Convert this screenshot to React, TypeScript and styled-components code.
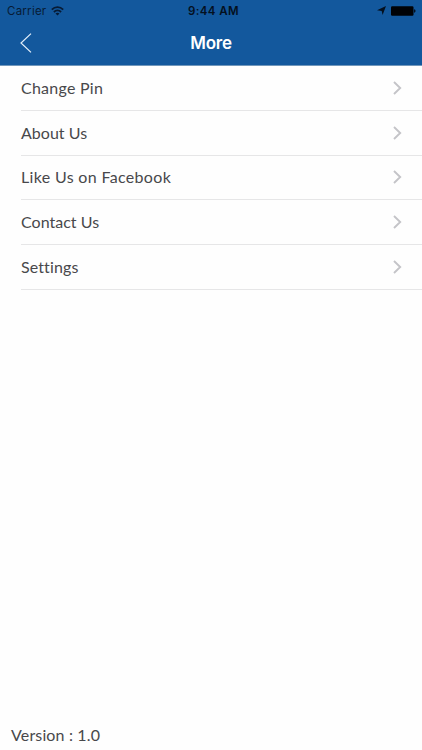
import React from "react";
import styled, { createGlobalStyle } from "styled-components";

const GlobalStyle = createGlobalStyle`
  * { box-sizing: border-box; }
  body { margin: 0; background: #fefefe; }
`;

const Screen = styled.div`
  width: 100%;
  height: 750px;
  display: flex;
  flex-direction: column;
  overflow: hidden;
  background: #fefefe;
  font-family: Lato, sans-serif;
  color: #48484b;
`;

const Header = styled.header`
  flex: none;
  height: 66px;
  background: #13589d;
  border-bottom: 1px solid #7197bb;
`;

const StatusBar = styled.div`
  display: grid;
  grid-template-columns: 1fr auto 1fr;
  align-items: center;
  height: 22px;
  padding: 0 6px 0 7px;
  font-family: Inter, sans-serif;
  font-size: 11.5px;
  color: #071b35;
`;

const StatusSide = styled.div<{ $end?: boolean }>`
  display: flex;
  align-items: center;
  justify-content: ${(p) => (p.$end ? "flex-end" : "flex-start")};
  gap: 5px;
  margin-top: -1px;
`;

const Carrier = styled.span`
  letter-spacing: 0.25px;
`;

const Clock = styled.span`
  padding-left: 4px;
  font-weight: 600;
  font-size: 11.5px;
  letter-spacing: 0.4px;
  color: #04101f;
`;

const NavBar = styled.nav`
  display: grid;
  grid-template-columns: 60px 1fr 60px;
  align-items: center;
  height: 42px;
`;

const BackButton = styled.button`
  display: flex;
  align-items: center;
  height: 42px;
  padding: 0 0 0 20px;
  border: 0;
  background: none;
  color: #e4f0fb;
`;

const Title = styled.h1`
  margin: 0;
  text-align: center;
  font-family: Inter, sans-serif;
  font-size: 17px;
  font-weight: 600;
  letter-spacing: -0.2px;
  color: #fff;
`;

const Menu = styled.ul`
  flex: 1;
  margin: 0;
  padding: 0 0 0 21px;
  list-style: none;
`;

const Row = styled.li`
  display: flex;
  align-items: center;
  justify-content: space-between;
  height: 44.8px;
  padding-right: 20px;
  border-bottom: 1px solid #e6e6e7;
`;

const Label = styled.span<{ $tracking: number }>`
  font-size: 16px;
  line-height: 20px;
  letter-spacing: ${(p) => p.$tracking}px;
  white-space: nowrap;
`;

const Version = styled.footer`
  flex: none;
  height: 30px;
  padding-left: 11px;
  font-size: 16px;
  line-height: 30px;
  letter-spacing: 0.15px;
`;

const items = [
  { label: "Change Pin", tracking: 0.25 },
  { label: "About Us", tracking: 0.03 },
  { label: "Like Us on Facebook", tracking: 0.33 },
  { label: "Contact Us", tracking: 0.02 },
  { label: "Settings", tracking: 0.12 },
];

const WifiIcon = () => (
  <svg width="13" height="10" viewBox="0 0 13 10" fill="none" stroke="currentColor" strokeWidth="1.8">
    <path d="M0.8 3.6C4 0.4 9 0.4 12.2 3.6" />
    <path d="M2.9 6C5 4 8 4 10.1 6" />
    <path d="M6.5 9.6L4.5 7.6C5.7 6.6 7.3 6.6 8.5 7.6Z" fill="currentColor" stroke="none" />
  </svg>
);

const LocationIcon = () => (
  <svg width="9" height="9" viewBox="0 0 9 9" fill="#04101f">
    <path d="M9 0L5.6 9L4.7 4.9L0 4.3Z" />
  </svg>
);

const BatteryIcon = () => (
  <svg width="25" height="10" viewBox="0 0 25 10" fill="#000206">
    <rect x="0" y="0.2" width="22.5" height="9.6" rx="1.2" />
    <path d="M23.2 3.3C24.9 3.6 24.9 6.4 23.2 6.7Z" />
  </svg>
);

const BackIcon = () => (
  <svg width="12" height="20" viewBox="0 0 12 20" fill="none" stroke="currentColor" strokeWidth="1.2">
    <path d="M11 0.6L1 10L11 19.4" />
  </svg>
);

const ChevronIcon = () => (
  <svg width="9" height="14" viewBox="0 0 9 14" fill="none" stroke="#c4c4c8" strokeWidth="1.9">
    <path d="M1 1L7.2 7L1 13" />
  </svg>
);

export default function App() {
  return (
    <Screen>
      <GlobalStyle />
      <Header>
        <StatusBar>
          <StatusSide>
            <Carrier>Carrier</Carrier>
            <WifiIcon />
          </StatusSide>
          <Clock>9:44 AM</Clock>
          <StatusSide $end>
            <LocationIcon />
            <BatteryIcon />
          </StatusSide>
        </StatusBar>
        <NavBar>
          <BackButton aria-label="Back">
            <BackIcon />
          </BackButton>
          <Title>More</Title>
        </NavBar>
      </Header>
      <Menu>
        {items.map((item) => (
          <Row key={item.label}>
            <Label $tracking={item.tracking}>{item.label}</Label>
            <ChevronIcon />
          </Row>
        ))}
      </Menu>
      <Version>Version : 1.0</Version>
    </Screen>
  );
}
